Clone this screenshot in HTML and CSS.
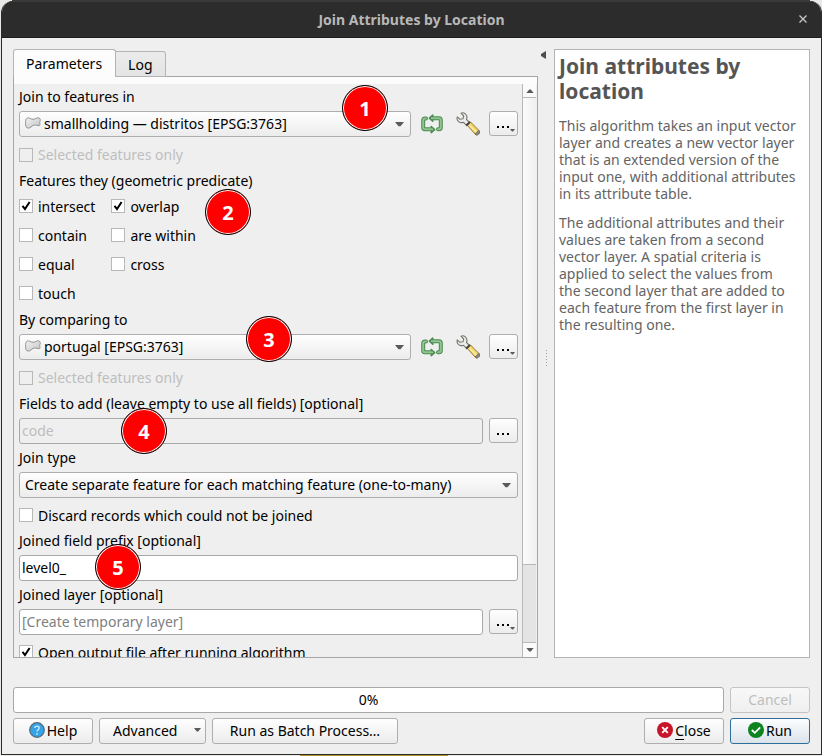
FILE: index.html
```html
<!DOCTYPE html>
<html lang="en">
<head>
<meta charset="utf-8">
<meta name="viewport" content="width=device-width, initial-scale=1">
<title>Join Attributes by Location</title>
<link rel="stylesheet" href="styles.css">
</head>
<body>
<svg class="symbols" aria-hidden="true">
  <defs>
    <linearGradient id="poly-fill" x1="0" y1="0" x2="1" y2="1">
      <stop offset="0" stop-color="#f2f2f2"/>
      <stop offset="1" stop-color="#c4c4c4"/>
    </linearGradient>
    <symbol id="polygon" viewBox="0 0 16 12">
      <path d="M1 2.500C1.300 1 3 .5 4.500 1.200C7 2.600 9 2.600 11.500 1.200C13 .4 15 .8 15.300 2.500C15.500 4 14.300 5 14.800 6.500C15.500 8 14.600 9 13 8.600C10.500 7.600 8.500 7.600 6 10C4.200 11.600 1.500 11.400 1 9.500C.4 7.500 .4 5 1 2.500Z" fill="url(#poly-fill)" stroke="#8f9396"/>
    </symbol>
    <symbol id="loop" viewBox="0 0 22 20">
      <g fill="none" stroke="#4b8a50" stroke-width="4" stroke-linejoin="round" stroke-linecap="round">
        <path d="M5 4.500H4Q2.200 4.500 2.200 6.300V13.500Q2.200 15.300 4 15.300H8.500"/>
        <path d="M17 15.300H18Q19.800 15.300 19.800 13.500V6Q19.800 4.200 18 4.200H13.500"/>
      </g>
      <path d="M8.400 4.200L11.800 1.200V7.200ZM13.600 15.600L10.200 12.600V18.600Z" fill="#90c590" stroke="#4b8a50" stroke-width="1.600" stroke-linejoin="round"/>
      <g fill="none" stroke="#90c590" stroke-width="2" stroke-linejoin="round" stroke-linecap="round">
        <path d="M5 4.500H4Q2.200 4.500 2.200 6.300V13.500Q2.200 15.300 4 15.300H11"/>
        <path d="M17 15.300H18Q19.800 15.300 19.800 13.500V6Q19.800 4.200 18 4.200H11"/>
      </g>
    </symbol>
    <symbol id="wrench" viewBox="0 0 24 24">
      <path d="M11 13L14.500 10L23 18.500C24 19.600 23.600 21 22.500 22C21.500 23 20 23.300 19 22Z" fill="#f0d36a" stroke="#9a7b2c" stroke-width="1"/>
      <path d="M13.500 13.300L20.800 20.800" stroke="#fbedb0" stroke-width="1.400"/>
      <path d="M19 22L22.800 18.300C24.300 20 23.800 21.300 22.500 22.300C21 23.500 19.800 23 19 22Z" fill="#8f8c84" stroke="#68645c" stroke-width=".8"/>
      <path d="M5 1.200L7.700 4L7 6.800L4 7.300L1.300 4.800C.5 7.300 1.600 9.800 4.200 10.500C5.500 10.900 6.800 10.500 7.500 10.400L10.800 13.600L13.700 10.700L10.500 7.500C11.300 5.300 11 3.200 9.300 1.800C8 .7 6.500 .5 5 1.200Z" fill="#ececea" stroke="#77756f" stroke-width="1.100" stroke-linejoin="round"/>
      <path d="M10.200 13.500L14 9.800" stroke="#42413d" stroke-width="1.800"/>
    </symbol>
    <symbol id="down" viewBox="0 0 9 5"><path d="M0 0H9L5.500 4.300H3.500Z" fill="#5a5a5a"/></symbol>
  </defs>
</svg>

<div class="dialog" role="dialog" aria-labelledby="dialog-title">
  <header class="titlebar">
    <h1 id="dialog-title">Join Attributes by Location</h1>
    <button class="window-close" type="button" aria-label="Close window">
      <svg width="10" height="10" viewBox="0 0 10 10"><path d="M1.500 1.500L8.500 8.500M8.500 1.500L1.500 8.500" stroke="#c4c4c4" stroke-width="1.400"/></svg>
    </button>
  </header>

  <main class="content">
    <div class="workspace">
      <section class="panel">
        <div class="tabs" role="tablist">
          <button class="tab tab-active" type="button" role="tab" aria-selected="true">Parameters</button>
          <button class="tab" type="button" role="tab" aria-selected="false">Log</button>
        </div>
        <div class="pane">
          <form class="form" id="parameters">
            <label class="caption" for="input-layer">Join to features in</label>
            <div class="row">
              <div class="combo">
                <svg class="layer-icon"><use href="#polygon"/></svg>
                <select id="input-layer"><option>smallholding — distritos [EPSG:3763]</option></select>
                <svg class="arrow"><use href="#down"/></svg>
              </div>
              <button class="tool" type="button" aria-label="Iterate over this layer"><svg width="22" height="20"><use href="#loop"/></svg></button>
              <button class="tool" type="button" aria-label="Advanced options"><svg width="24" height="24"><use href="#wrench"/></svg></button>
              <button class="more more-menu" type="button" aria-label="Browse input"><svg class="dots" viewBox="0 0 13 2"><path d="M0 0h2v2h-2zM5 0h2v2h-2zM10 0h2v2h-2z"/></svg><svg class="corner"><use href="#down"/></svg></button>
            </div>
            <label class="check check-disabled check-dependent"><input type="checkbox" disabled>Selected features only</label>

            <fieldset class="predicates">
              <legend class="caption">Features they (geometric predicate)</legend>
              <div class="grid">
                <label class="check"><input type="checkbox" checked>intersect</label>
                <label class="check"><input type="checkbox" checked>overlap</label>
                <label class="check"><input type="checkbox">contain</label>
                <label class="check"><input type="checkbox">are within</label>
                <label class="check"><input type="checkbox">equal</label>
                <label class="check"><input type="checkbox">cross</label>
                <label class="check"><input type="checkbox">touch</label>
              </div>
            </fieldset>

            <label class="caption" for="compare-layer">By comparing to</label>
            <div class="row">
              <div class="combo">
                <svg class="layer-icon"><use href="#polygon"/></svg>
                <select id="compare-layer"><option>portugal [EPSG:3763]</option></select>
                <svg class="arrow"><use href="#down"/></svg>
              </div>
              <button class="tool" type="button" aria-label="Iterate over this layer"><svg width="22" height="20"><use href="#loop"/></svg></button>
              <button class="tool" type="button" aria-label="Advanced options"><svg width="24" height="24"><use href="#wrench"/></svg></button>
              <button class="more more-menu" type="button" aria-label="Browse comparison layer"><svg class="dots" viewBox="0 0 13 2"><path d="M0 0h2v2h-2zM5 0h2v2h-2zM10 0h2v2h-2z"/></svg><svg class="corner"><use href="#down"/></svg></button>
            </div>
            <label class="check check-disabled check-dependent"><input type="checkbox" disabled>Selected features only</label>

            <label class="caption" for="fields">Fields to add (leave empty to use all fields) [optional]</label>
            <div class="row">
              <input class="field" id="fields" type="text" value="code" disabled>
              <button class="more" type="button" aria-label="Choose fields"><svg class="dots" viewBox="0 0 13 2"><path d="M0 0h2v2h-2zM5 0h2v2h-2zM10 0h2v2h-2z"/></svg></button>
            </div>

            <label class="caption" for="join-type">Join type</label>
            <div class="row">
              <div class="combo">
                <select id="join-type"><option>Create separate feature for each matching feature (one-to-many)</option></select>
                <svg class="arrow"><use href="#down"/></svg>
              </div>
            </div>
            <label class="check"><input type="checkbox">Discard records which could not be joined</label>

            <label class="caption" for="prefix">Joined field prefix [optional]</label>
            <div class="row"><input class="field" id="prefix" type="text" value="level0_"></div>

            <label class="caption" for="output">Joined layer [optional]</label>
            <div class="row">
              <input class="field" id="output" type="text" placeholder="[Create temporary layer]">
              <button class="more more-menu" type="button" aria-label="Browse output"><svg class="dots" viewBox="0 0 13 2"><path d="M0 0h2v2h-2zM5 0h2v2h-2zM10 0h2v2h-2z"/></svg><svg class="corner"><use href="#down"/></svg></button>
            </div>
            <label class="check"><input type="checkbox" checked>Open output file after running algorithm</label>

            <span class="badge badge-1">1</span>
            <span class="badge badge-2">2</span>
            <span class="badge badge-3">3</span>
            <span class="badge badge-4">4</span>
            <span class="badge badge-5">5</span>
          </form>
          <div class="scrollbar" aria-hidden="true">
            <div class="scroll-end"><svg class="flip"><use href="#down"/></svg></div>
            <div class="scroll-thumb"></div>
            <div class="scroll-track"></div>
            <div class="scroll-end"><svg><use href="#down"/></svg></div>
          </div>
        </div>
      </section>

      <div class="splitter" aria-hidden="true">
        <svg class="collapse" width="5" height="8" viewBox="0 0 5 8"><path d="M5 0V8L0 5V3Z" fill="#4d4d4d"/></svg>
        <div class="grip"></div>
      </div>

      <aside class="help-text">
        <h2>Join attributes by location</h2>
        <p>This algorithm takes an input vector layer and creates a new vector layer that is an extended version of the input one, with additional attributes in its attribute table.</p>
        <p>The additional attributes and their values are taken from a second vector layer. A spatial criteria is applied to select the values from the second layer that are added to each feature from the first layer in the resulting one.</p>
      </aside>
    </div>

    <footer class="footer">
      <div class="bar">
        <div class="progress" role="progressbar" aria-valuenow="0" aria-valuemin="0" aria-valuemax="100">0%</div>
        <button class="button" type="button" disabled>Cancel</button>
      </div>
      <div class="bar">
        <button class="button" type="button">
          <svg width="16" height="16" viewBox="0 0 16 16"><circle cx="8" cy="8" r="7.300" fill="#35a3e6" stroke="#576875" stroke-width="1.200"/><path d="M5.800 6C5.900 3.400 10.200 3.400 10.200 6C10.200 7.600 8 7.700 8 9.600" fill="none" stroke="#d8effc" stroke-width="1.300"/><circle cx="8" cy="11.800" r=".9" fill="#d8effc"/></svg>Help</button>
        <button class="button button-menu" type="button">Advanced<svg class="menu-arrow"><use href="#down"/></svg></button>
        <button class="button button-wide" type="button">Run as Batch Process…</button>
        <span class="spacer"></span>
        <button class="button" type="button">
          <svg width="16" height="16" viewBox="0 0 16 16"><circle cx="8" cy="8" r="8" fill="#c7162b"/><path d="M5.200 5.200L10.800 10.800M10.800 5.200L5.200 10.800" stroke="#fff" stroke-width="1.800"/></svg><span><u>C</u>lose</span></button>
        <button class="button button-primary" type="button">
          <svg width="16" height="16" viewBox="0 0 16 16"><circle cx="8" cy="8" r="8" fill="#0e8420"/><path d="M3.800 8L6.800 10.800L12.200 5.400" fill="none" stroke="#fff" stroke-width="1.800"/></svg>Run</button>
      </div>
    </footer>
  </main>
</div>
</body>
</html>
```

FILE: styles.css
```css
* {
  box-sizing: border-box;
}

body {
  margin: 0;
  min-height: 100vh;
  padding: 1px 0 1px 1px;
  display: flex;
  background:
    linear-gradient(#3a3a3a, #3a3a3a) 12px 0 / calc(100% - 24px) 1px no-repeat,
    linear-gradient(#b8902c, #b8902c) 300px 100% / 148px 2px no-repeat,
    #e8e8e6;
  font-family: "Noto Sans", sans-serif;
  font-size: 14px;
  color: #000;
}

button,
input,
select {
  font: inherit;
  color: inherit;
  margin: 0;
}

.symbols {
  position: absolute;
  width: 0;
  height: 0;
}

.dialog {
  flex: 1;
  display: flex;
  flex-direction: column;
  background: #efefef;
  border: 1px solid #2b2b2b;
  border-top: 0;
  border-radius: 12px 12px 0 0;
  overflow: hidden;
}

.titlebar {
  position: relative;
  height: 37px;
  flex: none;
  display: flex;
  align-items: center;
  justify-content: center;
  background: #2c2c2c;
  border-top: 1px solid #3a3a3a;
  border-bottom: 1px solid #1d1d1d;
}

.titlebar h1 {
  margin: 0;
  font-size: 14px;
  font-weight: 700;
  color: #b8b8b8;
}

.window-close {
  position: absolute;
  right: 8px;
  top: 7px;
  width: 20px;
  height: 20px;
  padding: 5px;
  border: 0;
  background: none;
  display: flex;
}

.content {
  flex: 1;
  display: flex;
  flex-direction: column;
  padding: 11px 11px 10px;
}

.workspace {
  flex: 1;
  display: flex;
}

.panel {
  flex: 1;
  min-width: 0;
  display: flex;
  flex-direction: column;
}

.tabs {
  display: flex;
  align-items: flex-end;
  height: 28px;
  flex: none;
  z-index: 1;
}

.tab {
  height: 26px;
  padding: 0 12px;
  border: 1px solid #b4b4b4;
  border-left: 0;
  border-radius: 0 3px 0 0;
  background: linear-gradient(#ebebeb, #e4e4e4);
}

.tab-active {
  height: 28px;
  padding: 0 13px 0 12px;
  border-left: 1px solid #b4b4b4;
  border-bottom: 0;
  border-radius: 3px 3px 0 0;
  background: #fcfcfc;
}

.pane {
  flex: 1 1 0;
  min-height: 0;
  margin-top: -1px;
  padding: 7px 1px 0 1px;
  display: flex;
  border: 1px solid #a6a6a6;
  background: linear-gradient(#fcfcfc 7px, #efefef 7px);
  overflow: hidden;
}

.form {
  position: relative;
  flex: 1;
  min-width: 0;
  height: 100%;
  overflow: hidden;
  display: flex;
  flex-direction: column;
  gap: 6px;
  padding: 5px 4px 0 4px;
}

.form > * {
  flex: none;
}

.caption {
  height: 16px;
  line-height: 16px;
  padding: 0;
}

.row {
  display: flex;
  height: 26px;
  gap: 6px;
}

.combo {
  flex: 1;
  min-width: 0;
  height: 26px;
  display: flex;
  align-items: center;
  padding: 0 6px 0 5px;
  border: 1px solid #aeaeae;
  border-radius: 3px;
  background: linear-gradient(#fefefe, #ececec);
}

.combo select {
  flex: 1;
  min-width: 0;
  height: 24px;
  padding: 0 0 1px;
  border: 0;
  background: none;
  appearance: none;
}

.layer-icon {
  width: 16px;
  height: 12px;
  margin: 0 3px 3px 0;
}

.arrow {
  width: 9px;
  height: 5px;
}

.tool {
  width: 30px;
  padding: 0;
  border: 0;
  background: none;
  display: flex;
  align-items: center;
  justify-content: center;
}

.more {
  position: relative;
  width: 29px;
  height: 25px;
  padding: 7px 0 0 0;
  border: 1px solid #aeaeae;
  border-radius: 3px;
  background: linear-gradient(#fefefe, #ececec);
  display: flex;
  align-items: center;
  justify-content: center;
}

.dots {
  width: 13px;
  height: 2px;
}

.corner {
  position: absolute;
  right: 2px;
  bottom: 3px;
  width: 5px;
  height: 3px;
}

.check {
  height: 23px;
  padding-bottom: 1px;
  display: flex;
  align-items: center;
  gap: 5px;
}

.check-dependent {
  height: 24px;
}

.check-disabled {
  color: #bebebe;
}

.check input {
  width: 14px;
  height: 14px;
  appearance: none;
  border: 1px solid #b8b8b8;
  background: #fff center / 10px 10px no-repeat;
}

.check input:disabled {
  background-color: transparent;
}

.check input:checked {
  background-image: url("data:image/svg+xml,%3Csvg xmlns='http://www.w3.org/2000/svg' viewBox='0 0 10 10'%3E%3Cpath d='M1.500 4.800L4 8L8.600 1' fill='none' stroke='%23000' stroke-width='2'/%3E%3C/svg%3E");
}

.predicates {
  display: flex;
  flex-direction: column;
  margin: 0;
  padding: 0;
  border: 0;
  min-width: 0;
}

.grid {
  display: grid;
  grid-template-columns: max-content max-content;
  grid-auto-rows: 24px;
  gap: 5px 16px;
  margin-top: 6px;
}

.field {
  flex: 1;
  min-width: 0;
  height: 26px;
  padding: 0 2px 1px;
  border: 1px solid #a8a8a8;
  border-radius: 3px;
  background: #fff;
}

.field:disabled {
  background: #efefef;
  color: #bebebe;
}

.field::placeholder {
  color: #808080;
  opacity: 1;
}

.badge {
  position: absolute;
  width: 46px;
  height: 46px;
  display: flex;
  align-items: center;
  justify-content: center;
  border: 1px solid #000;
  border-radius: 50%;
  background: #f00;
  box-shadow: inset 0 0 0 1px #fff;
  color: #fff;
  font-size: 20px;
  font-weight: 700;
}

.badge-1 { left: 327px; top: 1px; }
.badge-2 { left: 190px; top: 105px; }
.badge-3 { left: 231px; top: 232px; }
.badge-4 { left: 106px; top: 324px; }
.badge-5 { left: 80px; top: 460px; }

.scrollbar {
  width: 14px;
  flex: none;
  display: flex;
  flex-direction: column;
  border-left: 1px solid #b8b8b8;
}

.scroll-end {
  height: 14px;
  flex: none;
  display: flex;
  align-items: center;
  justify-content: center;
  background: #fafafa;
  border-bottom: 1px solid #b8b8b8;
}

.scroll-end:last-child {
  border-bottom: 0;
}

.scroll-end svg {
  width: 8px;
  height: 4px;
}

.flip {
  transform: rotate(180deg);
}

.scroll-thumb {
  flex: 467;
  background: linear-gradient(90deg, #fbfbfb, #f0f0f0);
}

.scroll-track {
  flex: 77;
  background: #e4e4e4;
  border-top: 1px solid #b8b8b8;
  border-bottom: 1px solid #b8b8b8;
}

.splitter {
  width: 16px;
  flex: none;
  display: flex;
  flex-direction: column;
  align-items: center;
}

.collapse {
  margin: 2px 5px 0 0;
  align-self: center;
}

.grip {
  width: 1px;
  height: 17px;
  margin: auto 0;
  background: repeating-linear-gradient(#a0a0a0 0 1px, transparent 1px 3px);
}

.help-text {
  width: 33%;
  max-width: 256px;
  flex: none;
  padding: 4px;
  border: 1px solid #b4b4b4;
  background: #fff;
  color: #646464;
  line-height: 17px;
}

.help-text h2 {
  margin: 0 0 13px;
  font-size: 21px;
  line-height: 25px;
  color: #555;
}

.help-text p {
  margin: 0 0 12px;
  padding-right: 8px;
}

.footer {
  display: flex;
  flex-direction: column;
  gap: 5px;
  padding-top: 29px;
}

.bar {
  display: flex;
  gap: 6px;
}

.progress {
  flex: 1;
  height: 26px;
  padding-bottom: 2px;
  display: flex;
  align-items: center;
  justify-content: center;
  border: 1px solid #a8a8a8;
  border-radius: 3px;
  background: #fff;
}

.button {
  width: 80px;
  height: 26px;
  padding: 0 0 2px;
  display: flex;
  align-items: center;
  justify-content: center;
  gap: 2px;
  border: 1px solid #aeaeae;
  border-radius: 3px;
  background: linear-gradient(#fefefe, #ececec);
}

.button:disabled {
  border-color: #c4c4c4;
  background: linear-gradient(#f8f8f8, #efefef);
  color: #bebebe;
}

.button u {
  text-underline-offset: 3px;
}

.button-menu {
  width: 107px;
  padding: 0 4px 2px 13px;
  justify-content: space-between;
}

.menu-arrow {
  width: 7px;
  height: 4px;
}

.button-wide {
  width: 186px;
}

.button-primary {
  border-color: #2d6f9a;
  background: linear-gradient(#fcfdfe, #dbe3ea);
}

.spacer {
  flex: 1;
}
```
